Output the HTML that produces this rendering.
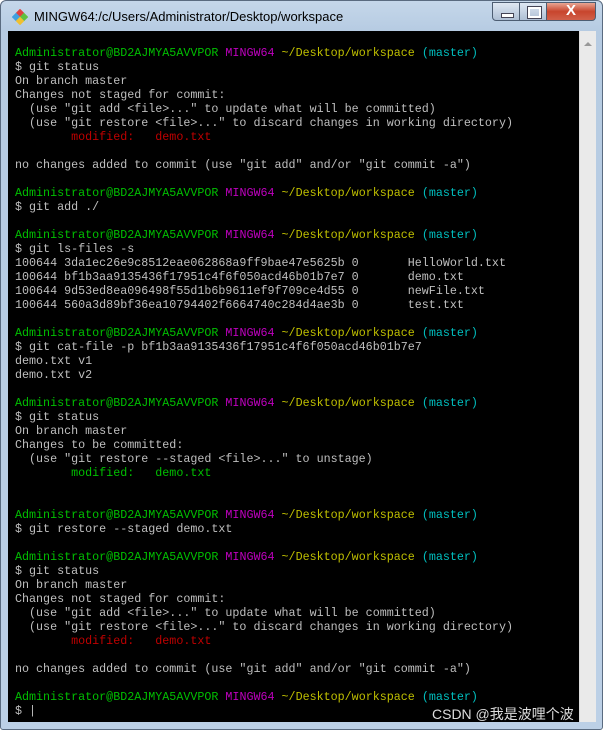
<!DOCTYPE html>
<html><head><meta charset="utf-8"><style>
html,body{margin:0;padding:0;width:603px;height:730px;overflow:hidden;background:#fff}
.win{position:absolute;left:0;top:0;width:601px;height:728px;border:1px solid #5a6b80;border-radius:6px 6px 3px 3px;background:linear-gradient(#c5d7ea,#b6cbe2 30px,#bcd0e6);}
.title{position:absolute;left:33px;top:8px;font:13px "Liberation Sans",sans-serif;color:#000}
.icon{position:absolute;left:11px;top:8px;width:16px;height:16px}
.btn{position:absolute;top:1px;height:19px;border:1px solid #4d5d72;box-sizing:border-box}
.term{position:absolute;left:8px;top:31px;width:571px;height:691px;background:#000;overflow:hidden}
.sb{position:absolute;left:579px;top:31px;width:16px;height:691px;background:#eaeaea;border-left:1px solid #ddd}
pre{margin:0;padding:1px 0 0 7px;font:11.7px/14px "Liberation Mono",monospace;color:#bfbfbf;white-space:pre}
.g{color:#00bf00}.m{color:#bf00bf}.y{color:#bfbf00}.c{color:#00bfbf}.r{color:#bf0000}
.wm{position:absolute;left:432px;top:704px;font:14px "Liberation Sans","Noto Sans CJK SC",sans-serif;color:#ddd}
</style></head><body>
<div class="win">
<svg class="icon" viewBox="0 0 16 16"><rect x="5" y="1" width="6" height="6" fill="#e04040" transform="rotate(45 8 4)"/><rect x="1" y="5" width="6" height="6" fill="#40a0e0" transform="rotate(45 4 8)"/><rect x="9" y="5" width="6" height="6" fill="#60c040" transform="rotate(45 12 8)"/><rect x="5" y="9" width="6" height="6" fill="#f0c030" transform="rotate(45 8 12)"/></svg>
<div class="title">MINGW64:/c/Users/Administrator/Desktop/workspace</div>
<div class="btn" style="left:491px;width:28px;border-radius:0 0 0 4px;background:linear-gradient(#dfe8f3,#aebfd4)"><div style="position:absolute;left:8px;top:10px;width:11px;height:3px;background:#fff;border:1px solid #445"></div></div>
<div class="btn" style="left:518px;width:28px;background:linear-gradient(#dfe8f3,#aebfd4)"><div style="position:absolute;left:8px;top:4px;width:9px;height:7px;border:2px solid #fff;outline:1px solid #445"></div></div>
<div class="btn" style="left:545px;width:50px;border-radius:0 0 4px 0;background:linear-gradient(#e8a593,#c8452d 50%,#d0604a)"><div style="position:absolute;left:19px;top:-1px;color:#fff;font:bold 15px 'Liberation Sans',sans-serif">X</div></div>
</div>
<div class="sb"><div style="position:absolute;left:4px;top:11px;width:0;height:0;border-left:4px solid transparent;border-right:4px solid transparent;border-bottom:4px solid #999"></div></div>
<div class="term"><pre>&#8203;
<span class="g">Administrator@BD2AJMYA5AVVPOR</span> <span class="m">MINGW64</span> <span class="y">~/Desktop/workspace</span> <span class="c">(master)</span>
$ git status
On branch master
Changes not staged for commit:
  (use "git add &lt;file&gt;..." to update what will be committed)
  (use "git restore &lt;file&gt;..." to discard changes in working directory)
        <span class="r">modified:   demo.txt</span>

no changes added to commit (use "git add" and/or "git commit -a")

<span class="g">Administrator@BD2AJMYA5AVVPOR</span> <span class="m">MINGW64</span> <span class="y">~/Desktop/workspace</span> <span class="c">(master)</span>
$ git add ./

<span class="g">Administrator@BD2AJMYA5AVVPOR</span> <span class="m">MINGW64</span> <span class="y">~/Desktop/workspace</span> <span class="c">(master)</span>
$ git ls-files -s
100644 3da1ec26e9c8512eae062868a9ff9bae47e5625b 0       HelloWorld.txt
100644 bf1b3aa9135436f17951c4f6f050acd46b01b7e7 0       demo.txt
100644 9d53ed8ea096498f55d1b6b9611ef9f709ce4d55 0       newFile.txt
100644 560a3d89bf36ea10794402f6664740c284d4ae3b 0       test.txt

<span class="g">Administrator@BD2AJMYA5AVVPOR</span> <span class="m">MINGW64</span> <span class="y">~/Desktop/workspace</span> <span class="c">(master)</span>
$ git cat-file -p bf1b3aa9135436f17951c4f6f050acd46b01b7e7
demo.txt v1
demo.txt v2

<span class="g">Administrator@BD2AJMYA5AVVPOR</span> <span class="m">MINGW64</span> <span class="y">~/Desktop/workspace</span> <span class="c">(master)</span>
$ git status
On branch master
Changes to be committed:
  (use "git restore --staged &lt;file&gt;..." to unstage)
        <span class="g">modified:   demo.txt</span>


<span class="g">Administrator@BD2AJMYA5AVVPOR</span> <span class="m">MINGW64</span> <span class="y">~/Desktop/workspace</span> <span class="c">(master)</span>
$ git restore --staged demo.txt

<span class="g">Administrator@BD2AJMYA5AVVPOR</span> <span class="m">MINGW64</span> <span class="y">~/Desktop/workspace</span> <span class="c">(master)</span>
$ git status
On branch master
Changes not staged for commit:
  (use "git add &lt;file&gt;..." to update what will be committed)
  (use "git restore &lt;file&gt;..." to discard changes in working directory)
        <span class="r">modified:   demo.txt</span>

no changes added to commit (use "git add" and/or "git commit -a")

<span class="g">Administrator@BD2AJMYA5AVVPOR</span> <span class="m">MINGW64</span> <span class="y">~/Desktop/workspace</span> <span class="c">(master)</span>
$ |</pre></div>
<div class="wm">CSDN @我是波哩个波</div>
</body></html>
